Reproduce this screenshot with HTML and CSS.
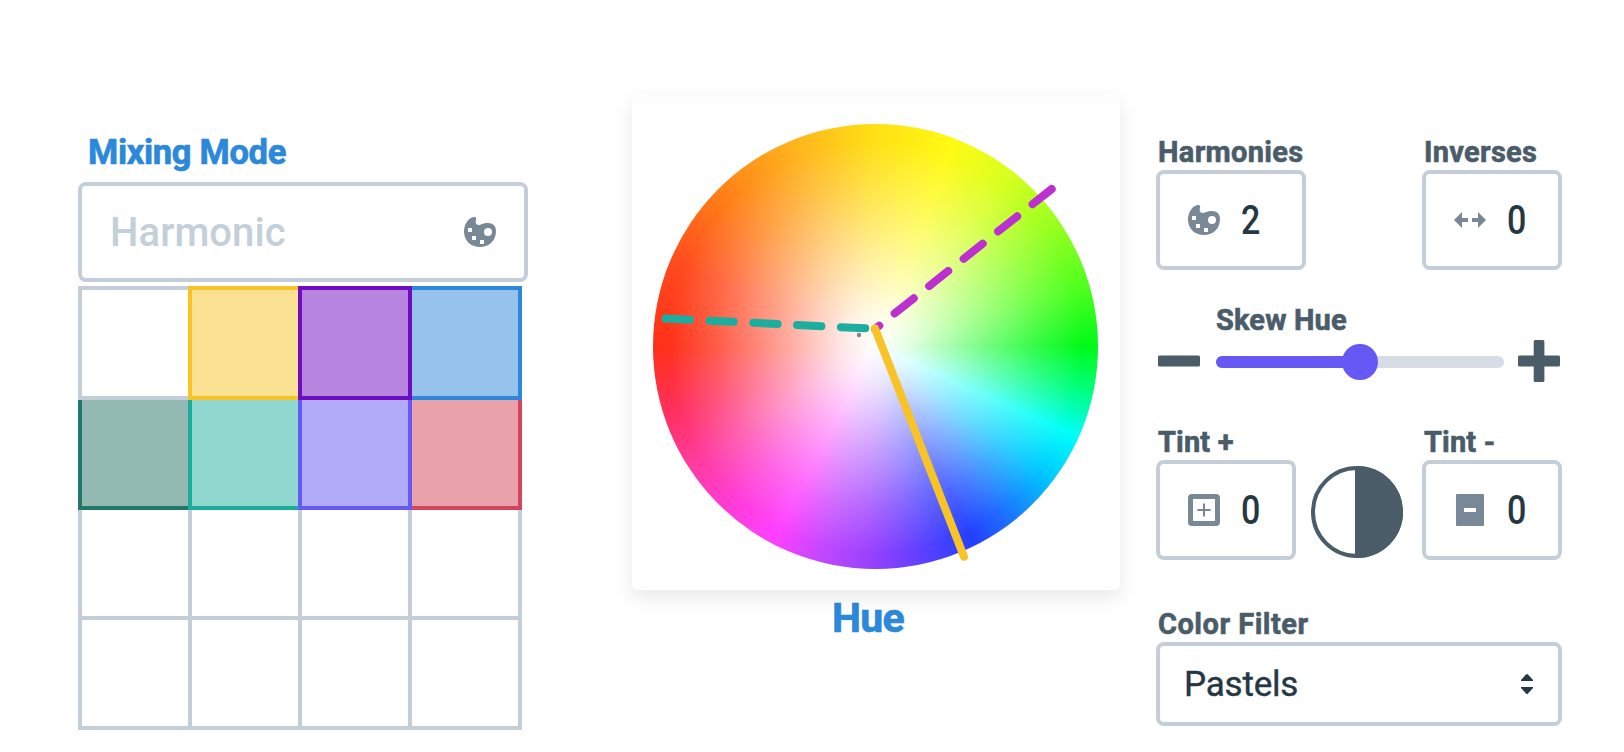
FILE: index.html
```html
<!DOCTYPE html>
<html lang="en">
<head>
<meta charset="utf-8">
<title>Color Mixer</title>
<link rel="stylesheet" href="styles.css">
</head>
<body>
<svg class="defs" aria-hidden="true">
  <symbol id="palette" viewBox="0 0 32 30">
    <path fill-rule="evenodd" d="M10.5 0C12 0 12.6 1.2 12 2.8C11.2 5.2 11.8 7.6 14.4 8C17 8 19 6 24 6C29 6 32 9 32 14C32 23.500 25.500 30 16 30C6.500 30 0 23.500 0 14.500C0 7 5 0 10.500 0ZM4 11V15H8V11ZM8 19V23H12V19ZM16 23V27H20V23ZM24 11A4 4 0 1 0 24 19A4 4 0 1 0 24 11Z"/>
  </symbol>
</svg>
<main class="mixer">
  <section class="mode">
    <h2 class="mode-title"><span>Mixing Mode</span></h2>
    <div class="field mode-field">
      <span class="placeholder">Harmonic</span>
      <svg class="icon palette"><use href="#palette"/></svg>
    </div>
    <div class="swatches">
      <div class="cell first"></div>
      <div class="cell yellow first"></div>
      <div class="cell purple first"></div>
      <div class="cell blue first"></div>
      <div class="cell green"></div>
      <div class="cell teal"></div>
      <div class="cell violet"></div>
      <div class="cell red"></div>
      <div class="cell"></div><div class="cell"></div><div class="cell"></div><div class="cell"></div>
      <div class="cell"></div><div class="cell"></div><div class="cell"></div><div class="cell"></div>
    </div>
  </section>

  <section class="hue">
    <div class="card">
      <div class="wheel"></div>
      <svg class="hands" viewBox="0 0 488 488">
        <g fill="none" stroke-width="8" stroke-linecap="round">
          <path d="M33.500 216.500L234.500 226.400" stroke="#1bae9f" stroke-dasharray="24.400 19.500"/>
          <path d="M419.700 87L243 227" stroke="#bc30d0" stroke-dasharray="24.400 19.600"/>
          <path d="M243 226.500L332 454.700" stroke="#f7c325"/>
        </g>
        <circle cx="227" cy="233" r="2.200" fill="#788896"/>
      </svg>
    </div>
    <h2 class="hue-title"><span>Hue</span></h2>
  </section>

  <section class="controls">
    <div class="row">
      <div class="group">
        <div class="label harmonies">Harmonies</div>
        <div class="field number wide">
          <svg class="icon palette"><use href="#palette"/></svg>
          <span class="digit">2</span>
        </div>
      </div>
      <div class="group">
        <div class="label inverses">Inverses</div>
        <div class="field number">
          <svg class="icon" viewBox="0 0 32 32"><path d="M0 16L8 8V14H14V18H8V24ZM32 16L24 8V14H18V18H24V24Z"/></svg>
          <span class="digit">0</span>
        </div>
      </div>
    </div>

    <div class="skew">
      <div class="label skew-label">Skew Hue</div>
      <div class="slider-row">
        <svg class="step" viewBox="0 0 42 42"><rect y="15.500" width="42" height="11" rx="1.500"/></svg>
        <div class="slider"><div class="fill"></div><div class="thumb"></div></div>
        <svg class="step" viewBox="0 0 42 42"><rect y="15.500" width="42" height="11" rx="1.500"/><rect x="15.700" width="10.700" height="42" rx="1.500"/></svg>
      </div>
    </div>

    <div class="row tint">
      <div class="group">
        <div class="label tint-plus">Tint +</div>
        <div class="field number">
          <svg class="icon" viewBox="0 0 32 32"><path fill-rule="evenodd" d="M4 0H28Q32 0 32 4V28Q32 32 28 32H4Q0 32 0 28V4Q0 0 4 0ZM5 5V27H27V5Z"/><path d="M15 9.500H17V15H22.500V17H17V22.500H15V17H9.500V15H15Z"/></svg>
          <span class="digit">0</span>
        </div>
      </div>
      <svg class="contrast" viewBox="0 0 92 92"><circle cx="46" cy="46" r="44" fill="#fff" stroke="#4b5c69" stroke-width="4"/><path d="M44 0H46A46 46 0 0 1 46 92H44Z"/></svg>
      <div class="group">
        <div class="label tint-minus">Tint -</div>
        <div class="field number">
          <svg class="icon" viewBox="0 0 32 32"><path fill-rule="evenodd" d="M3 0H29Q30 0 30 1V31Q30 32 29 32H3Q2 32 2 31V1Q2 0 3 0ZM10 14V18H22V14Z"/></svg>
          <span class="digit">0</span>
        </div>
      </div>
    </div>

    <div class="filter">
      <div class="label filter-label">Color Filter</div>
      <div class="field select">
        <span class="value">Pastels</span>
        <svg class="caret" viewBox="0 0 12 20"><path d="M0 7V6L5 .6Q6 -.4 7 .6L12 6V7ZM0 13V14L5 19.400Q6 20.400 7 19.400L12 14V13Z"/></svg>
      </div>
    </div>
  </section>
</main>
</body>
</html>
```
FILE: styles.css
```css
* { box-sizing: border-box; }

body {
  margin: 0;
  background: #fff;
  color: #263744;
  font-family: Roboto, "Liberation Sans", sans-serif;
}

h2 {
  margin: 0;
  font-weight: 700;
  color: #2b88da;
  white-space: nowrap;
  -webkit-text-stroke: .7px currentColor;
}
svg { display: block; flex: none; }
.defs { position: absolute; width: 0; height: 0; }

.mixer {
  display: flex;
  width: 1624px;
  height: 752px;
  padding-left: 78px;
  overflow: hidden;
}

.field {
  display: flex;
  align-items: center;
  height: 100px;
  border: 4px solid #c4ced8;
  border-radius: 8px;
  background: #fff;
}

.icon { width: 32px; height: 32px; fill: #788896; }
.icon.palette { height: 30px; }

/* Mixing mode */
.mode { width: 450px; padding-top: 122px; }
.mode-title { padding-left: 10px; font-size: 34.500px; line-height: 60px; letter-spacing: -.3px; }
.mode-field { justify-content: space-between; padding: 0 28px; }
.placeholder { font-size: 40px; font-weight: 500; letter-spacing: .1px; color: #c3cfd9; }

.swatches {
  display: grid;
  grid-template-columns: repeat(4, 110px);
  grid-auto-rows: 110px;
  margin-top: 4px;
}
.cell {
  position: relative;
  width: 114px;
  height: 114px;
  border: 4px solid #c3ced8;
  background: #fff;
}
.green { z-index: 1; border-color: #21786a; background: #92bab2; }
.teal { z-index: 2; border-color: #1bae9f; background: #8fd7ce; }
.red { z-index: 2; border-color: #d3455b; background: #e9a1ac; }
.violet { z-index: 3; border-color: #6658f5; background: #b2abfa; }
.first { z-index: 4; }
.yellow { z-index: 5; border-color: #f7c325; background: #fbe192; }
.blue { z-index: 5; border-color: #2b88da; background: #96c2ec; }
.purple { z-index: 6; border-color: #6e0cc0; background: #b785e0; }

/* Hue wheel */
.hue { width: 488px; margin-left: 104px; padding-top: 94px; }
.card {
  position: relative;
  height: 496px;
  padding: 30px 20.500px 21px;
  border-radius: 6px;
  background: linear-gradient(#fdfdfd 8px, #fff 8px);
  box-shadow: 0 8px 20px rgba(0, 0, 0, .09);
}
.wheel {
  width: 445px;
  height: 445px;
  border-radius: 50%;
  background:
    radial-gradient(closest-side, #fff 0%, rgba(255, 255, 255, .87) 16%, rgba(255, 255, 255, .5) 46%, rgba(255, 255, 255, .2) 72%, rgba(255, 255, 255, 0) 93%),
    conic-gradient(
      #ffe015 0deg, #fffa14 21deg, #d8ff20 38deg, #9cff20 55deg, #50ff20 74deg,
      #00fa18 90deg, #00ff80 102deg, #00fff8 114deg, #00c8ff 127deg,
      #2068ff 144deg, #2440ff 153deg, #4a40ff 163deg, #9440ff 180deg,
      #c048ff 194deg, #ff40ff 208deg, #ff3cd8 222deg, #ff3ca0 237deg,
      #ff3060 252deg, #ff3018 270deg, #ff4a1e 292deg, #ff8018 315deg,
      #ffb41e 338deg, #ffe015 360deg);
}
.hands { position: absolute; top: 8px; left: 0; width: 488px; height: 488px; }
.hue-title { padding-left: 200px; font-size: 41px; line-height: 57px; letter-spacing: -.7px; }

/* Controls */
.controls { width: 406px; margin-left: 36px; padding-top: 134px; }
.row { display: flex; justify-content: space-between; }
.label {
  height: 36px;
  padding-left: 2px;
  font-size: 29px;
  font-weight: 700;
  line-height: 36px;
  letter-spacing: .15px;
  color: #4b5c69;
  white-space: nowrap;
  -webkit-text-stroke: .6px currentColor;
}
.harmonies { letter-spacing: .33px; }
.inverses { letter-spacing: .28px; }
.filter-label { letter-spacing: .5px; }
.number { width: 140px; padding-left: 28px; gap: 21px; }
.wide { width: 150px; }
.digit {
  font-size: 41px;
  font-weight: 500;
  line-height: 48px;
  transform: scaleX(.83);
  transform-origin: left;
}

.skew { margin-top: 32px; }
.skew-label { padding-left: 60px; }
.slider-row {
  display: flex;
  align-items: center;
  justify-content: space-between;
  height: 46px;
  padding: 0 2px;
}
.step { width: 42px; height: 42px; fill: #4b5c69; }
.slider {
  position: relative;
  width: 288px;
  height: 12px;
  margin: 2px 0 0 2px;
  border-radius: 6px;
  background: #d8dde5;
}
.fill { width: 50%; height: 12px; border-radius: 6px 0 0 6px; background: #6658f5; }
.thumb {
  position: absolute;
  top: -12px;
  left: 126px;
  width: 36px;
  height: 36px;
  border-radius: 50%;
  background: #6658f5;
}

.tint { margin-top: 40px; }
.contrast { width: 92px; height: 92px; margin: 42px 4px 0 0; fill: #4b5c69; }

.filter { margin-top: 46px; }
.select { height: 84px; padding: 0 25px 0 24px; justify-content: space-between; }
.value { font-size: 35px; letter-spacing: -.2px; -webkit-text-stroke: .4px currentColor; }
.caret { width: 12px; height: 20px; fill: #263744; }
```
